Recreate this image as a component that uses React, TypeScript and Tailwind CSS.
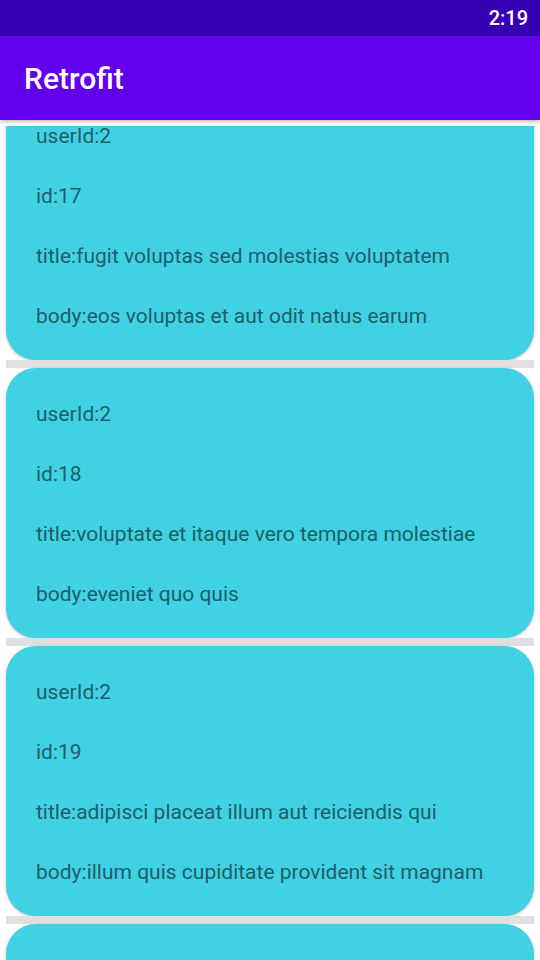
import React from "react";

const items = [
  { userId: 2, id: 17, title: "fugit voluptas sed molestias voluptatem", body: "eos voluptas et aut odit natus earum" },
  { userId: 2, id: 18, title: "voluptate et itaque vero tempora molestiae", body: "eveniet quo quis" },
  { userId: 2, id: 19, title: "adipisci placeat illum aut reiciendis qui", body: "illum quis cupiditate provident sit magnam" },
];

function Card({ it, first }: { it?: (typeof items)[number]; first?: boolean }) {
  return (
    <div className={first ? "mt-[-36px]" : ""}>
      <div className="mx-[6px] h-[270px] rounded-[30px] bg-[#41d1e4] shadow-[0_1px_3px_rgba(0,0,0,0.25)] flex flex-col justify-between pt-[31px] pb-[29px] px-[30px] text-[21px] leading-[30px] text-[#1d6068]">
        {it && (
          <>
            <div>userId:{it.userId}</div>
            <div>id:{it.id}</div>
            <div>title:{it.title}</div>
            <div>body:{it.body}</div>
          </>
        )}
      </div>
      <div className="mx-[6px] h-[8px] bg-[#e0e0e0]" />
    </div>
  );
}

export default function App() {
  return (
    <div className="w-[540px] h-[960px] bg-white overflow-hidden flex flex-col" style={{ fontFamily: "Roboto, 'Noto Sans', sans-serif" }}>
      <div className="h-[36px] bg-[#3700b3] flex items-center justify-end pr-[12px] text-white text-[20px] font-medium">
        2:19
      </div>
      <div className="relative z-10 h-[84px] bg-[#6200ee] flex items-center px-[24px] text-white text-[30px] font-medium shadow-[0_2px_4px_rgba(0,0,0,0.25)]">
        Retrofit
      </div>
      <div className="flex-1 overflow-hidden pt-[6px]">
        <div className="overflow-hidden h-full">
          {items.map((it, i) => (
            <Card key={it.id} it={it} first={i === 0} />
          ))}
          <Card />
        </div>
      </div>
    </div>
  );
}
